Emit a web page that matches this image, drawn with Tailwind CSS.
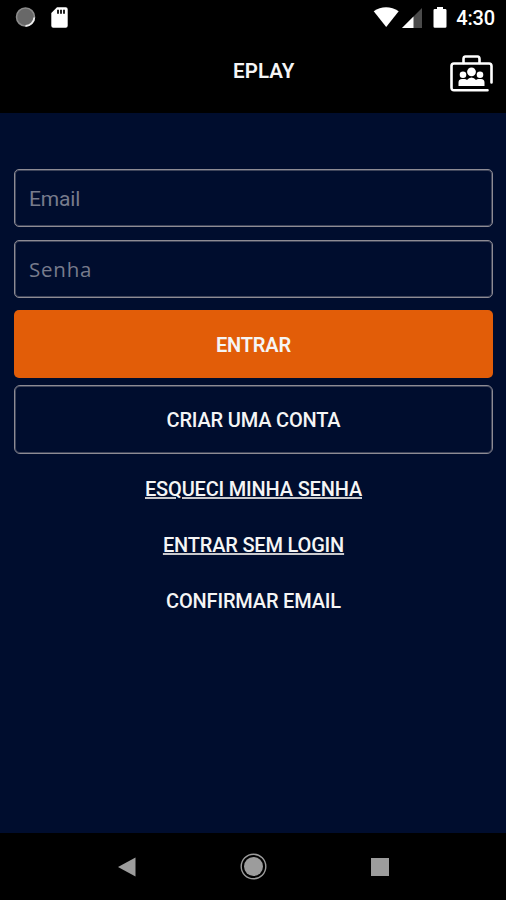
<!DOCTYPE html>
<html lang="pt-BR">
<head>
    <meta charset="UTF-8">
    <meta name="viewport" content="width=device-width, initial-scale=1.0">
    <title>EPLAY</title>
    <script src="https://cdn.jsdelivr.net/npm/@tailwindcss/browser@4"></script>
</head>
<body class="flex flex-col w-[506px] h-[900px] overflow-hidden bg-[#000d2e] text-[#f5f5f5] font-['Roboto',sans-serif] text-[20px] leading-6 font-medium tracking-[-0.18px]">

    <!-- Status bar -->
    <div class="h-9 shrink-0 bg-black flex items-center justify-between pl-[15px] pr-[11px]">
        <div class="flex items-center gap-3.5">
            <svg class="w-[22px] h-[22px]" viewBox="0 0 22 22">
                <circle cx="10.5" cy="10" r="9" fill="#686868" stroke="#8c8c8c" stroke-width="1.5"/>
                <path d="M19.3 10.5A9 9 0 0 1 10.5 19" fill="none" stroke="#eee" stroke-width="1.8"/>
            </svg>
            <svg class="w-[17px] h-[22px]" viewBox="0 0 17 22">
                <path d="M6 .3h8.7a2 2 0 0 1 2 2v16.4a2 2 0 0 1-2 2H2.3a2 2 0 0 1-2-2V6z" fill="#fff"/>
                <path d="M6 2.8h2v4H6zM9 2.8h2v4H9zM12 2.8h2v4h-2z" fill="#222"/>
            </svg>
        </div>
        <div class="flex items-center">
            <svg class="w-[26px] h-[22px]" viewBox="0 0 26 22">
                <path d="M.7 4.3C8-1 18-1 25.7 4.3L13.2 20z" fill="#fff"/>
            </svg>
            <svg class="w-5 h-[22px] ml-[3px]" viewBox="0 0 20 22">
                <path d="M20 1v20H0z" fill="#4b4b4b"/>
                <path d="M11.5 9.5V21H0z" fill="#fff"/>
            </svg>
            <svg class="w-[14px] h-[22px] ml-[11px]" viewBox="0 0 14 22">
                <path d="M4 0h6v2h2.2q1.3 0 1.3 1.3v16.2q0 1.3-1.3 1.3H1.8Q.5 20.8.5 19.5V3.3q0-1.3 1.3-1.3H4z" fill="#fff"/>
            </svg>
            <span class="ml-[9px] text-white">4:30</span>
        </div>
    </div>

    <!-- Header -->
    <header class="h-[77px] shrink-0 bg-black flex justify-between pl-[233px] pr-[13px]">
        <h1 class="pt-[23px] text-[20.5px] font-semibold tracking-[0.1px]">EPLAY</h1>
        <svg class="w-11 h-[37px] mt-[19px]" viewBox="0 0 44 37">
            <g fill="none" stroke="#fff" stroke-width="2.6" stroke-linejoin="round" stroke-linecap="round">
                <path d="M38.5 35.3H5q-2.5 0-2.5-2.5V11q0-2.5 2.5-2.5h35q2.5 0 2.5 2.5v16.5"/>
                <path d="M14.5 8V4q0-2.500 2-2.500h12q2 0 2 2.500v4"/>
            </g>
            <g fill="#fff">
                <circle cx="22.5" cy="16.8" r="4.4"/>
                <circle cx="14" cy="19.8" r="3.3"/>
                <circle cx="31" cy="19.8" r="3.3"/>
                <path d="M9.500 31v-3.500q0-3.500 3.500-3.500h2.500q1.500 0 2.500 1 1.800-2.500 4.500-2.500t4.500 2.500q1-1 2.500-1H32q3.500 0 3.500 3.500V31z"/>
            </g>
        </svg>
    </header>

    <!-- Login form -->
    <main class="grow flex flex-col items-center pl-[14px] pr-[13px] pt-14">
        <div class="w-full h-[58px] shrink-0 rounded-[5px] border border-[#8d8b94] shadow-[inset_0_0_0_1px_#8d8b9470] pl-3.5 pt-0.5 flex items-center text-[21px] font-normal text-[#777b8c]">Email</div>
        <div class="w-full h-[58px] shrink-0 mt-[13px] rounded-[5px] border border-[#8d8b94] shadow-[inset_0_0_0_1px_#8d8b9470] pl-3.5 flex items-center text-[20.5px] font-medium font-['Open_Sans',sans-serif] tracking-[0.8px] text-[#777b8c]">Senha</div>
        <button class="w-full h-[68px] shrink-0 mt-3 pt-0.5 rounded-[5px] bg-[#e25d08] font-semibold">ENTRAR</button>
        <button class="w-full h-[69px] shrink-0 mt-[7px] rounded-[6px] border border-[#8d8b94] shadow-[inset_0_0_0_1px_#8d8b9470]">CRIAR UMA CONTA</button>
        <a class="mt-[23px] underline decoration-[1.5px] decoration-[#c9c9cc] underline-offset-1">ESQUECI MINHA SENHA</a>
        <a class="mt-8 underline decoration-[1.5px] decoration-[#c9c9cc] underline-offset-1">ENTRAR SEM LOGIN</a>
        <a class="mt-8">CONFIRMAR EMAIL</a>
    </main>

    <!-- Navigation bar -->
    <nav class="h-[67px] shrink-0 bg-black flex items-center justify-between px-[117px]">
        <svg class="w-[19px] h-5" viewBox="0 0 19 20"><path d="M1 10 18.5.5v19z" fill="#9c9c9c"/></svg>
        <svg class="w-[27px] h-[27px]" viewBox="0 0 27 27">
            <circle cx="13.5" cy="13.5" r="12.3" fill="none" stroke="#9c9c9c" stroke-width="1.4"/>
            <circle cx="13.5" cy="13.5" r="9.5" fill="#9c9c9c"/>
        </svg>
        <div class="w-[18px] h-[18px] bg-[#9c9c9c]"></div>
    </nav>

</body>
</html>
